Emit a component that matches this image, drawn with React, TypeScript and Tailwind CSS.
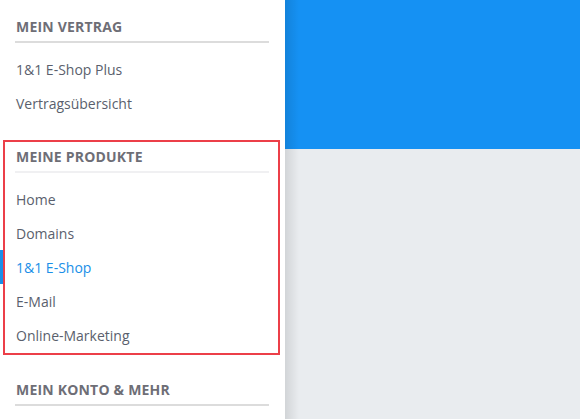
import React from 'react';

interface NavItem {
  label: string;
  active?: boolean;
}

interface NavSection {
  title: string;
  items: NavItem[];
  highlighted?: boolean;
  lightDivider?: boolean;
}

const SECTIONS: NavSection[] = [
  {
    title: 'Mein Vertrag',
    items: [{ label: '1&1 E-Shop Plus' }, { label: 'Vertragsübersicht' }],
  },
  {
    title: 'Meine Produkte',
    highlighted: true,
    lightDivider: true,
    items: [
      { label: 'Home' },
      { label: 'Domains' },
      { label: '1&1 E-Shop', active: true },
      { label: 'E-Mail' },
      { label: 'Online-Marketing' },
    ],
  },
  {
    title: 'Mein Konto & Mehr',
    items: [],
  },
];

const Section = ({ section }: { section: NavSection }) => (
  <div
    className={`relative ml-[3px] mr-[5px] border-2 ${
      section.highlighted ? 'border-[#ec3f48] pb-[1px]' : 'border-transparent'
    }`}
  >
    <div className="pl-[10px] pr-[9px]">
      <div
        className={`pt-[6px] pb-[6px] border-b-2 ${
          section.lightDivider ? 'border-[#f0f0f2]' : 'border-[#dcdcdc]'
        }`}
      >
        <h3 className="pl-[1px] text-[14px] leading-[17px] font-bold uppercase tracking-[0.2px] text-[#6e6e76]">
          {section.title}
        </h3>
      </div>
      {section.items.length > 0 && (
        <ul className="pt-[9px]">
          {section.items.map((item) => (
            <li key={item.label} className="relative h-[34px] flex items-center">
              {item.active && (
                <span className="absolute left-[-15px] top-0 h-[34px] w-[3px] bg-[#1a8fe8]" />
              )}
              <span
                className={`pl-[1px] text-[14px] ${item.active ? 'text-[#1a8fe8]' : 'text-[#5a5f6d]'}`}
              >
                {item.label}
              </span>
            </li>
          ))}
        </ul>
      )}
    </div>
  </div>
);

export default function App() {
  return (
    <div
      className="flex w-[580px] h-[419px] overflow-hidden bg-white"
      style={{ fontFamily: '"Open Sans", "Noto Sans", sans-serif' }}
    >
      <aside className="w-[285px] shrink-0 bg-white pt-[10px] flex flex-col gap-[18px]">
        {SECTIONS.map((s) => (
          <Section key={s.title} section={s} />
        ))}
      </aside>
      <main className="flex-1 flex flex-col bg-[#e9ecef] relative">
        <div className="h-[149px] bg-[#1591f3]" />
        <div className="flex-1" />
        <div className="absolute inset-y-0 left-0 w-[14px] bg-gradient-to-r from-black/10 to-transparent" />
      </main>
    </div>
  );
}
